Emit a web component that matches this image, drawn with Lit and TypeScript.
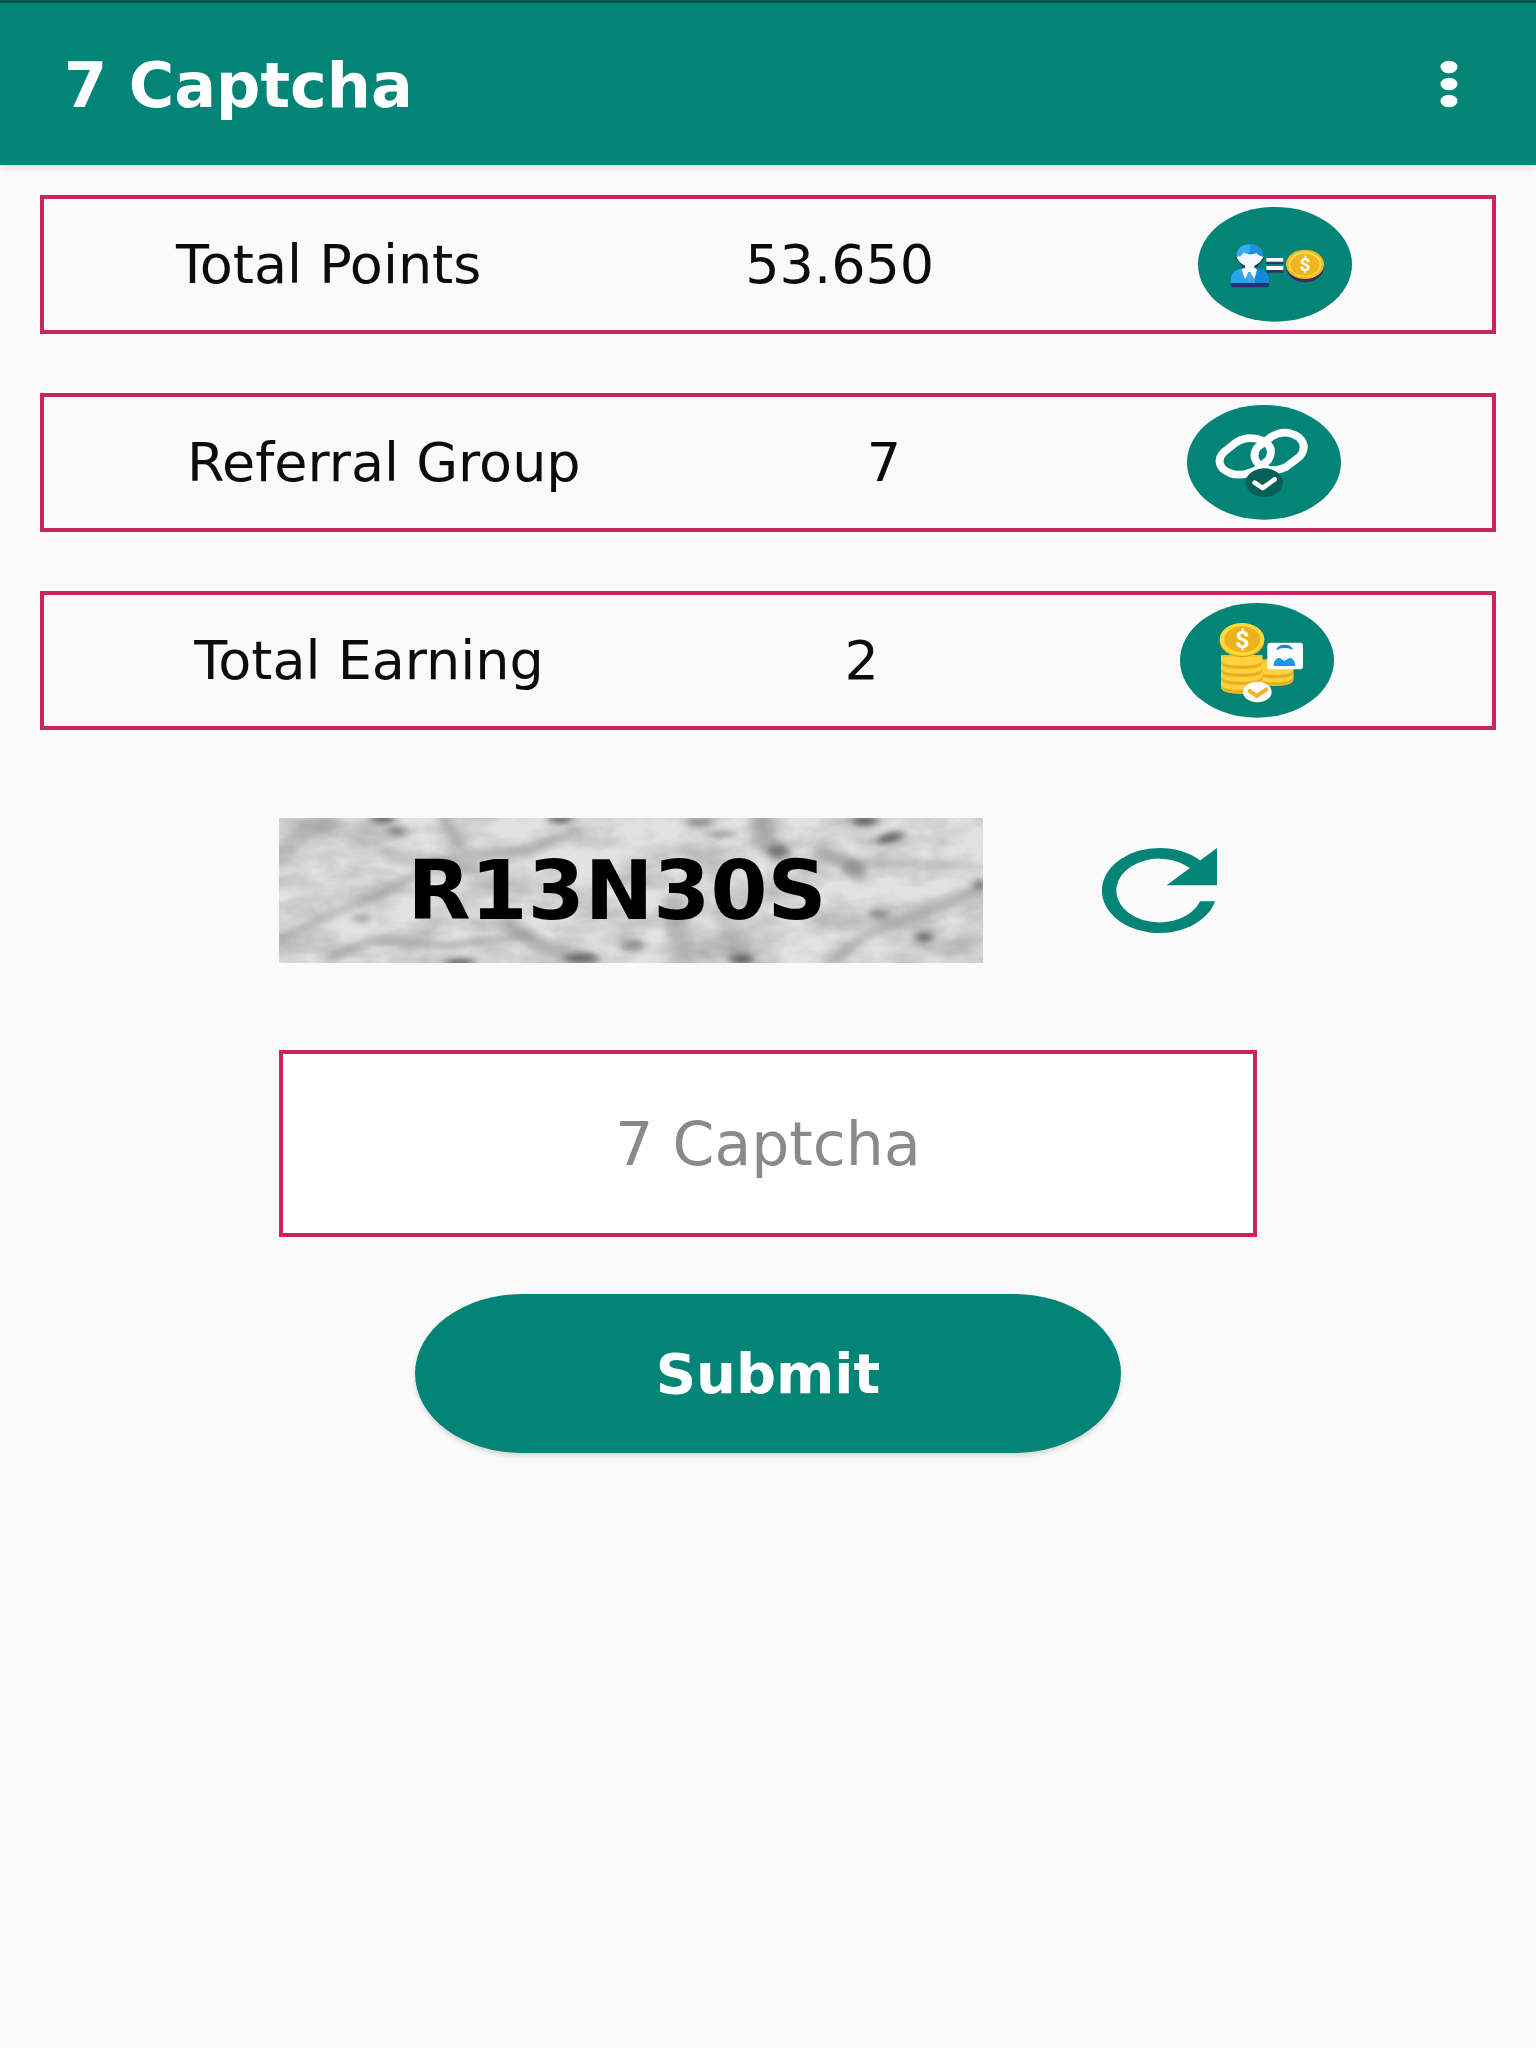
import { LitElement, html, css, svg } from "lit";
import { customElement, state } from "lit/decorators.js";

const pointsIcon = html`
  <svg class="badge" viewBox="65 52 462 345" aria-hidden="true">
    <ellipse cx="296" cy="224" rx="231" ry="172" fill="#028576" />
    <path d="M162 284v-10q0-32 40-40h36q40 6 40 40v10q0 9-9 9h-98q-9 0-9-9z" fill="#22307a" />
    <path d="M162 280v-6q0-34 42-40l16 12 16-12q42 6 42 40v6z" fill="#2ba4ee" />
    <path d="M238 234q40 6 40 40v6h-42z" fill="#1588dc" />
    <path d="M178 206l24 28h38l22-26v-12h-84z" fill="#1d2a6b" />
    <path d="M180 200q16-18 40-14 24-4 42 14-8 20-28 28v17l-14 14-14-14v-17q-20-8-26-28z" fill="#f5f8ff" />
    <path d="M204 234l14 12-12 22-10-28zM236 234l-14 12 12 22 8-28z" fill="#fff" />
    <path d="M215 247h8l3 20-7 12-7-12z" fill="#4ba9df" />
    <path d="M180 201q2-36 40-37 38 0 40 37-12-2-20-12-18 10-36 0-8 2-10 11z" fill="#35aef2" />
    <path d="M220 164q38 0 40 37-10-1-20-12-12 6-26 4 14-12 6-29z" fill="#1e91dd" />
    <path d="M270 213h51v10h-51zM270 238h51v11h-51z" fill="#34306f" />
    <path d="M270 205h51v11h-51zM270 229h51v12h-51z" fill="#fff" />
    <ellipse cx="386" cy="234" rx="56" ry="44" fill="#3a2c62" />
    <ellipse cx="386" cy="224" rx="57" ry="44" fill="#f5bd22" />
    <ellipse cx="386" cy="224" rx="49" ry="37" fill="#ffdf55" />
    <ellipse cx="386" cy="225" rx="44" ry="33" fill="#efb51f" />
    <text class="coin" x="386" y="243" font-size="56">$</text>
  </svg>
`;

const referralIcon = html`
  <svg class="badge" viewBox="47 45 462 345" aria-hidden="true">
    <ellipse cx="278" cy="217" rx="231" ry="172" fill="#028576" />
    <g fill="none" stroke="#fff" stroke-width="23">
      <path d="M158 186l35-28q38-24 84-5 35 22 14 57l-28 23q-8 10-35 17-43 13-75-15-19-25 5-49z" />
      <path d="M302 139q42-24 82 4 26 26 1 57l-41 31q-35 18-71 1-38-27-15-60z" />
    </g>
    <ellipse cx="279" cy="278" rx="56" ry="43" fill="#075f57" />
    <path d="M250 278l24 16 36-26" fill="none" stroke="#fff" stroke-width="14" stroke-linecap="round" stroke-linejoin="round" />
  </svg>
`;

const coinLayer = (x: number, y: number, w: number) => svg`
  <path d="M${x} ${y}v14q0 20 ${w / 2} 20t${w / 2}-20v-14z" fill="#f2b824" />
  <path d="M${x} ${y - 4}v8q0 18 ${w / 2} 18t${w / 2}-18v-8z" fill="#ffd240" />
  <path d="M${x} ${y + 8}q0 18 ${w / 2} 18t${w / 2}-18v4q-6 17-${w / 2} 17t-${w / 2}-17z" fill="#dd9d1c" />
`;

const earningIcon = html`
  <svg class="badge" viewBox="60 39 462 345" aria-hidden="true">
    <ellipse cx="291" cy="211" rx="231" ry="172" fill="#028576" />
    <path d="M290 215q0-8 60-8t50 8v54q-4 17-54 17-40 0-56-16z" fill="#f9c52c" />
    ${coinLayer(288, 254, 112)} ${coinLayer(288, 232, 112)}
    <path d="M288 214h60v26q-34 6-60-6z" fill="#ffcf3a" />
    <path d="M183 195h124v96q-4 20-62 20t-62-20z" fill="#f9c52c" />
    ${coinLayer(183, 277, 124)} ${coinLayer(183, 252, 124)} ${coinLayer(183, 228, 124)} ${coinLayer(183, 204, 124)}
    <ellipse cx="246" cy="154" rx="67" ry="47" fill="#dca01c" />
    <ellipse cx="246" cy="148" rx="67" ry="49" fill="#ffd83c" />
    <ellipse cx="247" cy="148" rx="54" ry="39" fill="#edb31c" />
    <text class="coin" x="247" y="173" font-size="74">$</text>
    <rect x="322" y="158" width="107" height="80" rx="9" fill="#fff" />
    <path d="M348 181q4-17 26-17t25 17q-12-8-25-7-14 0-26 7z" fill="#1a86d4" />
    <path d="M341 228q0-21 16-25l16 9 17-9q15 4 16 25z" fill="#1d96e8" />
    <path d="M362 204l12 8 12-8-12-5z" fill="#dff1ff" />
    <ellipse cx="292" cy="306" rx="43" ry="31" fill="#fff" />
    <path d="M269 303l22 15 28-20" fill="none" stroke="#f0b429" stroke-width="12" stroke-linecap="round" stroke-linejoin="round" />
  </svg>
`;

const texture = html`
  <svg class="texture" viewBox="0 0 704 145" preserveAspectRatio="none" aria-hidden="true">
    <defs>
      <filter id="soft" x="-20%" y="-20%" width="140%" height="140%"><feGaussianBlur stdDeviation="5 3" /></filter>
      <filter id="grain" x="0" y="0" width="100%" height="100%">
        <feTurbulence type="fractalNoise" baseFrequency="0.018 0.035" numOctaves="4" seed="8" />
        <feColorMatrix values="0 0 0 0 .35  0 0 0 0 .35  0 0 0 0 .35  1.7 0 0 0 -.56" />
      </filter>
    </defs>
    <rect width="704" height="145" fill="#e2e2e2" />
    <rect width="704" height="145" filter="url(#grain)" opacity=".75" />
    <g fill="none" stroke="#8c8c8c" filter="url(#soft)" stroke-linecap="round">
      <path d="M0 120L50 97 109 73 165 40 250 31 300 12" stroke-width="7" opacity=".5" />
      <path d="M50 140L92 122 170 128 250 117" stroke-width="8" opacity=".5" />
      <path d="M165 0L180 26" stroke-width="12" opacity=".5" />
      <path d="M0 40Q20 10 54 0" stroke-width="18" opacity=".35" />
      <path d="M231 106L265 130 310 142" stroke-width="16" opacity=".5" />
      <path d="M482 0L484 20 500 36" stroke-width="20" opacity=".55" />
      <path d="M540 35L568 43 581 58" stroke-width="15" opacity=".5" />
      <path d="M704 70L650 92 590 115 550 145" stroke-width="11" opacity=".45" />
      <path d="M395 85L405 145M445 95L460 145" stroke-width="22" opacity=".35" />
      <path d="M575 45L704 48" stroke-width="4" opacity=".35" />
      <path d="M110 38L190 50" stroke-width="14" opacity=".35" />
    </g>
    <g fill="#5e5e5e" filter="url(#soft)">
      <ellipse cx="104" cy="1" rx="13" ry="4" /><ellipse cx="118" cy="13" rx="9" ry="4" opacity=".8" />
      <ellipse cx="281" cy="1" rx="12" ry="4" /><ellipse cx="420" cy="5" rx="14" ry="3" opacity=".8" />
      <ellipse cx="442" cy="16" rx="16" ry="3" opacity=".6" /><ellipse cx="499" cy="33" rx="10" ry="6" opacity=".8" />
      <ellipse cx="586" cy="3" rx="13" ry="5" /><ellipse cx="611" cy="20" rx="14" ry="5" transform="rotate(-14 611 20)" />
      <ellipse cx="701" cy="67" rx="5" ry="5" /><ellipse cx="600" cy="96" rx="10" ry="5" opacity=".6" />
      <ellipse cx="645" cy="119" rx="9" ry="5" opacity=".9" /><ellipse cx="354" cy="127" rx="12" ry="6" opacity=".6" />
      <ellipse cx="463" cy="141" rx="12" ry="5" /><ellipse cx="302" cy="140" rx="18" ry="4" />
      <ellipse cx="180" cy="145" rx="16" ry="4" /><ellipse cx="83" cy="100" rx="10" ry="4" opacity=".5" />
      <ellipse cx="575" cy="50" rx="12" ry="8" opacity=".4" />
    </g>
  </svg>
`;

@customElement("app-root")
export class AppRoot extends LitElement {
  static styles = css`
    :host {
      display: block;
      min-height: 100vh;
      background: #fafafa;
      color: #0c0c0c;
      font-family: "DejaVu Sans", Inter, Roboto, sans-serif;
    }
    * {
      box-sizing: border-box;
    }
    button {
      border: 0;
      margin: 0;
      font: inherit;
      background: none;
      cursor: pointer;
    }
    svg {
      display: block;
    }
    .bar {
      display: flex;
      align-items: center;
      justify-content: space-between;
      height: 165px;
      padding: 0 64px;
      border-top: 3px solid #00564b;
      background: #028576;
      color: #fff;
      box-shadow: 0 2px 8px rgba(0, 0, 0, 0.12);
    }
    .title {
      margin: 0;
      padding-top: 4px;
      font-size: 62px;
      line-height: 72px;
      font-weight: 700;
    }
    .menu {
      padding: 0 14px;
      color: inherit;
    }
    .dots {
      width: 18px;
      height: 48px;
      fill: currentColor;
    }
    .content {
      padding: 30px 40px;
    }
    .stats {
      display: grid;
      gap: 59px;
      margin: 0;
    }
    .stat {
      display: flex;
      align-items: center;
      justify-content: space-around;
      height: 139px;
      padding-right: 8px;
      border: 4px solid #cc2462;
      font-size: 54px;
      line-height: 64px;
    }
    .badge {
      width: 154px;
      height: 115px;
    }
    .coin {
      fill: #fff;
      font-family: Roboto, sans-serif;
      font-weight: 700;
      text-anchor: middle;
    }
    .form {
      display: flex;
      flex-direction: column;
      margin: 88px 239px 0;
    }
    .challenge {
      display: flex;
      align-items: center;
      gap: 79px;
    }
    .captcha {
      display: grid;
      flex: 1;
      height: 145px;
      overflow: hidden;
    }
    .texture,
    .code {
      grid-area: 1 / 1;
    }
    .texture {
      width: 100%;
      height: 145px;
    }
    .code {
      z-index: 1;
      align-self: center;
      padding-right: 28px;
      text-align: center;
      color: #000;
      font-size: 82px;
      line-height: 96px;
      font-weight: 700;
    }
    .refresh {
      padding: 0 40px;
      color: #028576;
    }
    .arrow {
      width: 115px;
      height: 85px;
      fill: currentColor;
    }
    .answer {
      width: 100%;
      height: 187px;
      margin: 87px 0 57px;
      border: 4px solid #cc2462;
      border-radius: 0;
      background: #fff;
      color: #0c0c0c;
      font: inherit;
      font-size: 60px;
      text-align: center;
    }
    .answer::placeholder {
      color: #8a8a8a;
      opacity: 1;
    }
    .submit {
      height: 159px;
      margin: 0 136px;
      border-radius: 108px / 80px;
      background: #028576;
      color: #fff;
      font-size: 56px;
      font-weight: 700;
      box-shadow: 0 3px 5px rgba(0, 0, 0, 0.14);
    }
  `;

  @state() private answer = "";

  private stats = [
    { label: "Total Points", value: "53.650", icon: pointsIcon },
    { label: "Referral Group", value: "7", icon: referralIcon },
    { label: "Total Earning", value: "2", icon: earningIcon },
  ];

  private onInput(e: Event) {
    this.answer = (e.target as HTMLInputElement).value;
  }

  render() {
    return html`
      <header class="bar">
        <h1 class="title">7 Captcha</h1>
        <button class="menu" type="button" aria-label="More options">
          <svg class="dots" viewBox="0 0 18 48" aria-hidden="true">
            <ellipse cx="9" cy="7" rx="8.5" ry="6.3" />
            <ellipse cx="9" cy="24" rx="8.5" ry="6.3" />
            <ellipse cx="9" cy="41" rx="8.5" ry="6.3" />
          </svg>
        </button>
      </header>
      <main class="content">
        <section class="stats">
          ${this.stats.map(
            (s) => html`
              <div class="stat">
                <span>${s.label}</span>
                <span>${s.value}</span>
                ${s.icon}
              </div>
            `
          )}
        </section>
        <form class="form" @submit=${(e: Event) => e.preventDefault()}>
          <div class="challenge">
            <div class="captcha">
              ${texture}
              <span class="code">R13N30S</span>
            </div>
            <button class="refresh" type="button" aria-label="New captcha">
              <svg class="arrow" viewBox="4 4 16 16" preserveAspectRatio="none" aria-hidden="true">
                <path
                  d="M17.65 6.35A7.958 7.958 0 0 0 12 4a8 8 0 1 0 7.73 10h-2.08A6 6 0 1 1 12 6c1.66 0 3.14.69 4.22 1.78L13 11h7V4z"
                />
              </svg>
            </button>
          </div>
          <input
            class="answer"
            type="text"
            aria-label="7 Captcha"
            placeholder="7 Captcha"
            .value=${this.answer}
            @input=${this.onInput}
          />
          <button class="submit" type="submit">Submit</button>
        </form>
      </main>
    `;
  }
}
